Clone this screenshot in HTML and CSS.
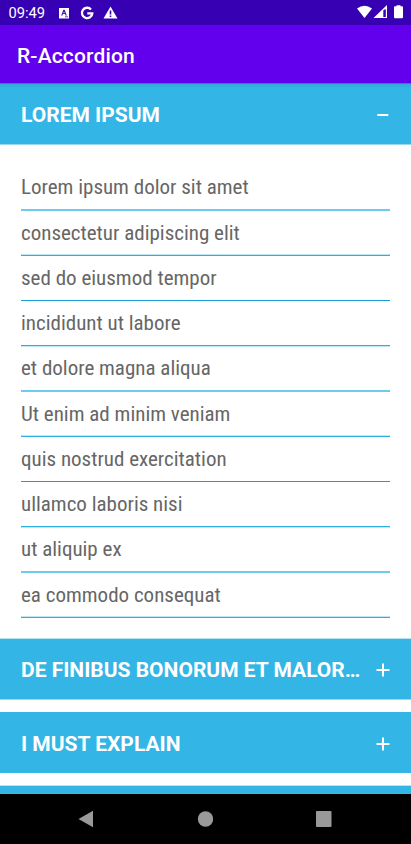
FILE: index.html
```html
<!DOCTYPE html>
<html lang="en">
<head>
<meta charset="utf-8">
<title>R-Accordion</title>
<link rel="stylesheet" href="styles.css">
</head>
<body>
<div class="screen">
  <div class="status">
    <span class="clock">09:49</span>
    <svg class="notices" width="62" height="16" viewBox="0 0 62 16">
      <path fill="#fff" fill-rule="evenodd" d="M1 3h10v10.500H1zM5.400 4.700 3.200 10.500h1.200l.5-1.400h2.200l.5 1.400h1.200L6.600 4.700zM6 6.300l.7 1.900H5.300zM7 11.500v.8h3v-.8z"/>
      <path fill="none" stroke="#fff" stroke-width="2.300" d="M33 4.500A5.200 5.200 0 1 0 34.300 8.300H29.300"/>
      <path fill="#fff" fill-rule="evenodd" d="M52.500 1.500 59.500 13.500h-14zM51.700 5.500v4h1.600v-4zM51.700 10.500V12h1.600v-1.500z"/>
    </svg>
    <svg class="signals" width="50" height="16" viewBox="0 0 50 16">
      <path fill="#fff" d="M0 4.500Q7.500-.8 15 4.500L7.500 14z"/>
      <path fill="#fff" fill-rule="evenodd" d="M30 1v13H16.500zM26.300 6.300v6.700h2.500V5z"/>
      <path fill="#fff" d="M39.500 2.200V1.200h4v1h1.500q1 0 1 1v10q0 1-1 1h-7q-1 0-1-1v-10q0-1 1-1z"/>
    </svg>
  </div>
  <header class="appbar">R-Accordion</header>
  <main class="accordion">
    <section class="panel open">
      <h2 class="head"><span class="label">LOREM IPSUM</span><svg class="sign" width="14" height="14" viewBox="0 0 14 14"><path d="M1.300 7h11"/></svg></h2>
      <ul class="items">
        <li>Lorem ipsum dolor sit amet</li>
        <li>consectetur adipiscing elit</li>
        <li>sed do eiusmod tempor</li>
        <li>incididunt ut labore</li>
        <li>et dolore magna aliqua</li>
        <li>Ut enim ad minim veniam</li>
        <li>quis nostrud exercitation</li>
        <li>ullamco laboris nisi</li>
        <li>ut aliquip ex</li>
        <li>ea commodo consequat</li>
      </ul>
    </section>
    <section class="panel soft">
      <h2 class="head"><span class="label">DE FINIBUS BONORUM ET MALORUM</span><svg class="sign" width="14" height="14" viewBox="0 0 14 14"><path d="M.5 7h13M7 .5v13"/></svg></h2>
    </section>
    <section class="panel">
      <h2 class="head"><span class="label">I MUST EXPLAIN</span><svg class="sign" width="14" height="14" viewBox="0 0 14 14"><path d="M.5 7h13M7 .5v13"/></svg></h2>
    </section>
    <section class="panel soft">
      <h2 class="head"></h2>
    </section>
  </main>
  <nav class="navbar">
    <svg width="16" height="18" viewBox="0 0 16 18"><path d="M.5 9 15 .8v16.400z"/></svg>
    <svg width="16" height="16" viewBox="0 0 16 16"><circle cx="8.500" cy="8" r="7.700"/></svg>
    <svg width="16" height="16" viewBox="0 0 16 16"><rect width="15.500" height="16" rx="1"/></svg>
  </nav>
</div>
</body>
</html>
```
FILE: styles.css
```css
* { box-sizing: border-box; }
body { margin: 0; font-family: Roboto, sans-serif; background: #fff; }
.screen { display: flex; flex-direction: column; height: 844px; overflow: hidden; }
.status {
  flex: none; display: flex; align-items: center; height: 25px;
  padding: 0 5px 0 8px; background: #3700b3; color: #fff;
}
.clock { font-size: 14.700px; line-height: 25px; width: 50px; padding: 2px 0 0 .5px; }
.notices { flex: none; }
.signals { flex: none; margin-right: -1px; margin-left: auto; margin-bottom: 1px; }
.appbar {
  flex: none; height: 58px; padding-left: 17px; line-height: 62px;
  background: #6200ee; color: #fff; font-size: 21px; font-weight: 500;
  letter-spacing: .15px;
}
.accordion {
  flex: 1; min-height: 0; overflow: hidden;
  display: flex; flex-direction: column; gap: 12px;
}
.panel { flex: none; }
.head {
  display: flex; align-items: center; justify-content: space-between;
  height: 61px; margin: 0; padding: 3px 21px 0;
  background: #33b5e5; color: #fff; font-size: 21px; font-weight: 700;
}
.open .head {
  height: 62px; padding-top: 2px;
  background: linear-gradient(#4470d0 1px, #31a9d8 1px, #33b5e5 5px, #33b5e5 61px, #99daf2 61px);
}
.soft .head {
  height: 62px; padding-top: 2px;
  background: linear-gradient(#b5e4f5 1px, #33b5e5 1px, #33b5e5 61px, #99daf2 61px);
}
.label { width: 340px; overflow: hidden; text-overflow: ellipsis; white-space: nowrap; }
.sign { flex: none; margin-bottom: 1px; fill: none; stroke: #fff; stroke-width: 2; }
.items { list-style: none; margin: 0; padding: 20px 21px 8px; }
.items li {
  --upper: #70caed; --lower: #70caed;
  height: 45px; line-height: 43px; color: #666;
  background: linear-gradient(var(--upper) 1px, var(--lower) 1px) bottom / 100% 2px no-repeat;
  font-family: "Roboto Condensed", Roboto, sans-serif;
  font-stretch: 75%; font-size: 21px;
}
.items li:first-child { height: 46px; padding-top: 1px; }
.items li:nth-child(4n+2) { --upper: #bce7f7; --lower: #2bb0e2; line-height: 44px; }
.items li:nth-child(4n+3) { --upper: #18a0d6; --lower: transparent; height: 46px; line-height: 44px; }
.items li:nth-child(4n) { --upper: #2bb0e2; --lower: #bce7f7; line-height: 42px; }
.navbar {
  flex: none; height: 50px; padding: 0 79px 0 78px; background: #000;
  display: flex; align-items: center; justify-content: space-between;
}
.navbar svg { fill: #999; }
```
